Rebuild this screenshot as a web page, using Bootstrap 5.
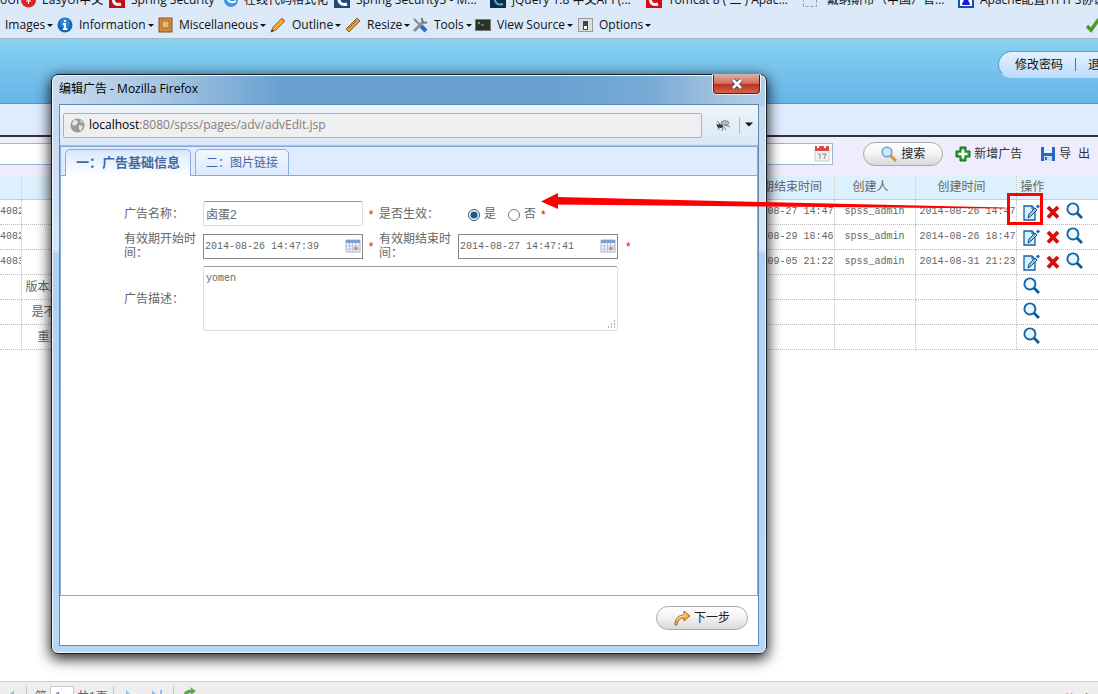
<!DOCTYPE html>
<html lang="zh-CN">
<head>
<meta charset="utf-8">
<meta name="viewport" content="width=device-width, initial-scale=1">
<title>广告管理</title>
<link href="https://cdn.jsdelivr.net/npm/bootstrap@5.3.0/dist/css/bootstrap.min.css" rel="stylesheet">
<style>
body{height:100vh;overflow:hidden;font:12px/14px "Liberation Sans","Noto Sans CJK SC",sans-serif;color:#666;background:#fff}
svg{display:block;flex:none}
button{font:inherit}
.browser-chrome{background:#dbe9f8;border-bottom:1px solid #a3b6cc;font:12px/18px "Open Sans","Noto Sans CJK SC",sans-serif;color:#111;height:39px}
.browser-chrome a{color:#111;text-decoration:none;white-space:nowrap;display:flex;align-items:center;gap:6px;flex:none}
.bookmarks{height:10px}
.bookmarks a{height:20px}
.devtools{height:28px;padding:2px 0 0 5px;gap:6px}
.devtools a{gap:6px}
.tri{width:0;height:0;border:3px solid transparent;border-top:3px solid #111;border-bottom:0;margin-left:-4px}
.site-head{height:65px;background:linear-gradient(#86d2ef,#68b3e7);border-bottom:1px solid #4f9ac0;padding-top:12px}
.user-menu{height:27px;width:130px;margin-right:-30px;border:1px solid #5c9fc4;border-bottom-color:#b8dcf8;border-radius:14px 0 0 14px;background:linear-gradient(#e6f2ff,#bddcfb);padding-left:16px;gap:12px}
.user-menu a{color:#111;text-decoration:none;white-space:nowrap}
.user-menu .vr{height:13px;align-self:center;color:#456;opacity:.8}
.site-band{height:33px;background:#dfecfe;border-bottom:2px solid #333}
.query{height:38px;background:#efedfd;padding:0 8px 4px 0;position:relative}
.query input{height:22px;border:1px solid #9ab6d2;background:#fff;width:150px;padding:0 4px}
.pill{height:24px;border:1px solid #aaa;border-radius:12px;background:linear-gradient(#fff,#f4f4f4 45%,#d9d9d9);color:#222;padding:0}
.plain{border:0;background:none;padding:0;color:#333}
.ads{table-layout:fixed;width:100%;border-collapse:collapse;margin-top:-1px}
.ads th{background:#dcf0fd;font-weight:400;border-top:1px dotted #ccc;border-bottom:1px solid #c5ced6}
.ads th,.ads td{height:25px;padding:0;text-align:center;border-right:1px dotted #bbb;white-space:nowrap;overflow:hidden}
.ads td{border-bottom:1px dotted #bbb}
.ads tr>:last-child{border-right:0}
.mono{font-family:"Liberation Mono","Noto Sans CJK SC",monospace;font-size:10px}
.ops{gap:6px;padding-left:6px}
.ops a:last-child{margin-bottom:3px}
.pager{height:13px;background:#eee;border-top:1px solid #ccc;overflow:hidden;padding:4px 4px 0 0}
.pager>*{flex:none}
.pager .bar{width:1px;height:20px;background:#c4c4c4}
.pager input{width:24px;height:20px;border:1px solid #ccc;padding:0 4px;font-size:11px;color:#666}
.win{position:absolute;left:51px;top:74px;bottom:40px;width:716px;border:1px solid #141c26;border-radius:7px;padding:0 7px 7px;
 background:linear-gradient(90deg,#c9dcee 0,#a4c4e2 16%,#69a0d0 32%,#68a1d1 70%,#78abd6 84%,#a9c6e0 95%,#b4cfe8) top/100% 31px no-repeat,linear-gradient(#c2d8ee,#d6e6f8 30%,#b0d2f4 31%,#b5d8f8);
 box-shadow:inset 0 0 0 1px #f0f7ff,0 4px 14px 1px rgba(0,0,0,.85)}
.win-title{height:29px;color:#000;font:12px/28px "Open Sans","Noto Sans CJK SC",sans-serif}
.win-close{width:47px;height:19px;margin-right:-1px;border:1px solid #5a1f1b;border-top:0;border-radius:0 0 4px 4px;background:linear-gradient(#e8a89d,#cf6a5a 48%,#b8301c 50%,#d5654a);box-shadow:0 0 0 1px rgba(255,255,255,.7);padding:0}
.win-body{border:1px solid #6289b0;background:#fff;min-height:0}
.address{height:41px;background:linear-gradient(#eef5fc,#d9e7f7);border-bottom:1px solid #a9c0d8;padding:0 8px 0 3px}
.url{height:25px;border:1px solid #9db6cb;border-radius:2px;background:#efefef;color:#808080;font:12px/22px "Open Sans",sans-serif;padding-left:6px;gap:4px}
.url b{font-weight:400;color:#000}
.tabs{height:30px;background:#dfecff;border:1px solid #86abdf;padding:2px 0 0 4px;gap:4px}
.tabs button{border:1px solid #86abdf;border-radius:5px 5px 0 0;background:linear-gradient(#f3f8ff,#dbe8fc);color:#416aa3;padding:0 10px;height:27px}
.tabs button.on{background:linear-gradient(#d9e7fd,#fff);border-bottom:0;font-weight:700;font-size:13px}
.panel{border:1px solid #86abdf;border-top:0;padding:25px 63px}
.fields{display:grid;grid-template-columns:79px 160px 16px 79px 160px auto;row-gap:6px;align-items:center;justify-content:start;color:#666}
.fields .tall{height:28px}
.fields input[type=text],.fields textarea{border:1px solid #d9dee6;border-top-color:#999;border-radius:2px;color:#666;width:100%;height:25px;padding:0 2px;display:block}
.fields .when input{border-color:#888;border-radius:0;padding:0 1px}
.fields textarea{height:65px;resize:none;padding:5px 2px}
.fields i{font-style:normal;color:#f00;justify-self:center;padding-top:3px;line-height:11px}
.fields input[type=radio]{width:12px;height:12px;margin:3px 4px 0 0;accent-color:#245a86}
.when,.desc{position:relative}
.when svg{position:absolute;right:2px;top:5px}
.desc{grid-column:2/6}
.desc svg{position:absolute;right:2px;bottom:2px}
.foot{height:49px;padding:10px 10px 0 0}
.note{position:absolute;left:0;top:0;pointer-events:none}
</style>
</head>
<body class="d-flex flex-column">
<svg width="0" height="0" class="position-absolute">
 <defs>
  <symbol id="lens" viewBox="0 0 16 16"><path d="M9.500 9.500l5.500 5.500" stroke="#0b5a94" stroke-width="2.600"/><circle cx="6.500" cy="6.500" r="5.200" fill="#eaf6fd" stroke="#0f66a8" stroke-width="1.800"/></symbol>
  <symbol id="edit" viewBox="0 0 17 17"><path d="M1 2h8l3 3v11H1z" fill="#d8effc" stroke="#1c5c9c" stroke-width="1.300"/><path d="M9 2v3h3" fill="none" stroke="#1c5c9c"/><path d="M5 14l1-4 6-6 2 2-6 6z" fill="#8fc4e8" stroke="#17508c"/><path d="M14 1.500l2 2" stroke="#1668c0" stroke-width="3"/></symbol>
  <symbol id="del" viewBox="0 0 14 14"><path d="M2 2l10 10.500M12 2L2 12.500" stroke="#d80c0c" stroke-width="3.800"/></symbol>
  <symbol id="cal" viewBox="0 0 16 14"><path d="M1 1h14v12H1z" fill="#eef3fb" stroke="#a5b4cc"/><path d="M1 1h14v3H1z" fill="#7ea0d6"/><path d="M4.500 4v9M7.500 4v9M10.500 4v9M1 7h14M1 10h14" stroke="#b7c6de"/><path d="M9 8h4v3H9z" fill="#ee8a72"/></symbol>
 </defs>
</svg>

<header class="browser-chrome flex-shrink-0">
 <nav class="bookmarks d-flex align-items-end" aria-label="书签">
  <a href="#" style="width:21px">oUI</a>
  <a href="#" style="width:88px"><svg width="15" height="16"><circle cx="7.500" cy="8" r="7.500" fill="#e02222"/><path d="M4 5h7M5 9h5M7.500 5v7" stroke="#fff"/></svg>EasyUI中文</a>
  <a href="#" style="width:115px"><svg width="16" height="16"><path d="M0 0h16v16H0z" fill="#c40d12"/><path d="M12 12c-6 2-9-2-7-8" stroke="#fff" stroke-width="3" fill="none"/></svg>Spring Security</a>
  <a href="#" style="width:110px"><svg width="14" height="16"><circle cx="7" cy="8" r="7" fill="#3c9ae0"/><path d="M3 6c2 5 6 5 9 3" stroke="#fff" stroke-width="2" fill="none"/></svg>在线代码格式化</a>
  <a href="#" style="width:156px"><svg width="16" height="16"><path d="M0 0h16v16H0z" fill="#1d4a78"/><path d="M13 12c-6 2-9-2-8-8" stroke="#fff" stroke-width="3" fill="none"/></svg>Spring Security3 - M...</a>
  <a href="#" style="width:156px"><svg width="16" height="16"><path d="M0 0h16v16H0z" fill="#0f2c46"/><path d="M13 12c-6 2-9-2-8-8" stroke="#4aa8dc" stroke-width="2" fill="none"/></svg>jQuery 1.8 中文API (...</a>
  <a href="#" style="width:157px"><svg width="16" height="16"><path d="M0 0h16v16H0z" fill="#d40d12"/><path d="M12 12c-6 2-9-2-7-8" stroke="#fff" stroke-width="3" fill="none"/></svg>Tomcat 8 ( 二 ) Apac...</a>
  <a href="#" style="width:155px"><svg width="18" height="16"><path d="M.5.5h13v14H.5z" fill="none" stroke="#999" stroke-dasharray="3 2"/></svg>戴纳斯帝（中国）官...</a>
  <a href="#"><svg width="16" height="16"><path d="M1 1h14v14H1z" fill="#fff" stroke="#1c4fa8" stroke-width="2"/><path d="M4 13c0-3 2-3 2-6h4c0 3 2 3 2 6z" fill="#1a1ae0"/></svg>Apache配置HTTPS协议</a>
 </nav>
 <nav class="devtools d-flex align-items-center" aria-label="开发工具">
  <a href="#" style="width:46px">Images<span class="tri"></span></a>
  <a href="#" style="width:95px"><svg width="16" height="16"><circle cx="8" cy="8" r="7.500" fill="#1768b8"/><circle cx="8" cy="6" r="5" fill="#4a9be0" opacity=".6"/><path d="M8 3v2M6 7h2v5M6 12h4.500" stroke="#fff" stroke-width="2" fill="none"/></svg>Information<span class="tri"></span></a>
  <a href="#" style="width:106px"><svg width="15" height="16"><rect x="1" y="1" width="13" height="14" fill="#d18a3c" stroke="#8a5416"/><path d="M4 4h7v7H4z" fill="#e8b878" stroke="#a86c28"/></svg>Miscellaneous<span class="tri"></span></a>
  <a href="#" style="width:69px"><svg width="16" height="16"><path d="M1 15l2-5L12 1l3 3-9 9z" fill="#f2a73b" stroke="#a86a1c"/><path d="M11 2l1-1 3 3-1 1z" fill="#d9696a"/><path d="M1 15l1-3 2 2z" fill="#333"/></svg>Outline<span class="tri"></span></a>
  <a href="#" style="width:61px"><svg width="16" height="16"><path d="M1 12L12 1l3 3L4 15z" fill="#d79a54" stroke="#9a6424"/><path d="M4 10l1 1M6 8l1 1M8 6l1 1M10 4l1 1" stroke="#7a4c14"/></svg>Resize<span class="tri"></span></a>
  <a href="#" style="width:57px"><svg width="16" height="16"><path d="M2 2l7 7" stroke="#888" stroke-width="2"/><path d="M9 9l5 5" stroke="#2c6cc4" stroke-width="4"/><path d="M2 14l9-9" stroke="#8a8f96" stroke-width="3"/><path d="M10 1c-1 3 2 6 5 4" stroke="#777" stroke-width="2" fill="none"/></svg>Tools<span class="tri"></span></a>
  <a href="#" style="width:97px"><svg width="16" height="16"><rect x=".5" y="2.500" width="15" height="11" fill="#263326" stroke="#777"/><path d="M3 5l2 1-2 1M6 8h3" stroke="#6c6" fill="none"/></svg>View Source<span class="tri"></span></a>
  <a href="#"><svg width="15" height="16"><rect x=".5" y="1.500" width="14" height="13" fill="#ddd" stroke="#999"/><rect x="5.500" y="4.500" width="4" height="8" fill="#fff" stroke="#444"/><path d="M5 5h5v4H5z" fill="#444"/></svg>Options<span class="tri"></span></a>
  <svg class="ms-auto" width="12" height="16"><path d="M1 9l4 4 8-11" stroke="#4d9a18" stroke-width="3.500" fill="none"/></svg>
 </nav>
</header>

<div class="site-head d-flex justify-content-end flex-shrink-0">
 <nav class="user-menu d-flex align-items-center"><a href="#">修改密码</a><span class="vr"></span><a href="#">退出</a></nav>
</div>
<div class="site-band flex-shrink-0"></div>

<form class="query d-flex align-items-center flex-shrink-0" onsubmit="return false">
 <input type="text" class="border-start-0" aria-label="广告名称">
 <span class="when ms-auto"><input type="text" aria-label="结束时间"><svg width="17" height="17" style="top:2px"><path d="M1 3h14v13H1z" fill="#f2f2f2" stroke="#ccc"/><path d="M1 1h14v5H1z" fill="#dc4b4b"/><path d="M4 0v3M11 0v3" stroke="#fff" stroke-width="2"/><path d="M4 9h2v5M8 9h4l-2 5" stroke="#888" fill="none"/></svg></span>
 <button class="pill d-flex align-items-center justify-content-center gap-1" style="width:80px;margin:0 12px 0 30px"><svg width="16" height="16"><path d="M9 9l6 6" stroke="#d99338" stroke-width="3"/><circle cx="6" cy="6" r="4.800" fill="#cfe8fb" stroke="#6fa3d8" stroke-width="1.600"/></svg>搜索</button>
 <button class="plain d-flex align-items-center" style="gap:3px;margin-right:19px"><svg width="16" height="16"><path d="M5 1h6v4h4v6h-4v4H5v-4H1V5h4z" fill="#2fa03a" stroke="#0c6a1c"/><path d="M8 3.500v9M3.500 8h9" stroke="#fff" stroke-width="2.500"/></svg>新增广告</button>
 <button class="plain d-flex align-items-center" style="gap:4px"><svg width="14" height="16"><path d="M0 1h14v14H0z" fill="#2b66c4"/><path d="M3 1h8v6H3z" fill="#eaf3fd"/><path d="M3 10h8v5H3z" fill="#d5dbe4"/><path d="M4 11h2v3H4z" fill="#2b66c4"/></svg><span>导&nbsp; 出</span></button>
</form>

<main class="flex-grow-1">
<table class="ads">
 <colgroup><col style="width:21px"><col style="width:57px"><col><col style="width:108px"><col style="width:81px"><col style="width:101px"><col style="width:82px"></colgroup>
 <thead><tr><th></th><th></th><th></th><th>有效期结束时间</th><th class="pe-2">创建人</th><th class="pe-2">创建时间</th><th class="text-start ps-1">操作</th></tr></thead>
 <tbody id="rows"></tbody>
</table>
</main>

<footer class="pager d-flex align-items-start flex-shrink-0">
 <svg width="26" height="20"><path d="M14 4l-6 6 6 6z" fill="#9bb8e8"/></svg><span class="bar"></span>
 <span style="padding:4px 3px 0 8px">第</span><input type="text" value="1" aria-label="页码"><span style="padding:4px 5px 0 3px">共1页</span><span class="bar"></span>
 <svg width="59" height="20"><path d="M12 4l6 6-6 6zM38 4l6 6-6 6zM46 4h2v12h-2z" fill="#9bb8e8"/></svg><span class="bar"></span>
 <svg width="30" height="20"><path d="M9 12c0-8 6-9 8-8l-1-3 6 4-5 4v-2c-3 0-4 2-4 5z" fill="#5cab4c"/></svg>
 <span class="ms-auto" style="padding-top:7px">共6条</span>
</footer>

<section class="win d-flex flex-column" role="dialog" aria-label="编辑广告">
 <div class="win-title d-flex justify-content-between flex-shrink-0"><span>编辑广告 - Mozilla Firefox</span>
  <button class="win-close d-flex align-items-center justify-content-center" aria-label="关闭"><svg width="14" height="12"><path d="M3 2l8 8M11 2l-8 8" stroke="#445" stroke-width="4.500"/><path d="M3 2l8 8M11 2l-8 8" stroke="#fff" stroke-width="2.600"/></svg></button></div>
 <div class="win-body d-flex flex-column flex-grow-1">
  <div class="address d-flex align-items-center flex-shrink-0">
   <div class="url d-flex align-items-center flex-grow-1"><svg width="15" height="15"><circle cx="7.500" cy="7.500" r="7" fill="#999"/><path d="M4 2l4 1-1 3-3 2-2-2zM9 7l4 1-2 5-2-2zM10 2l3 2-2 1z" fill="#e8e8e8"/></svg><span><b>localhost</b>:8080/spss/pages/adv/advEdit.jsp</span></div>
   <svg width="37" height="16"><g transform="translate(14 1)"><ellipse cx="4" cy="8" rx="3" ry="2" fill="#333"/><ellipse cx="9" cy="5" rx="4" ry="2.300" fill="#bbb" stroke="#888"/><path d="M0 6l3 1M2 12l2-3M6 13l1-4M1 3l4 4M10 12l-2-3M14 9L9 7" stroke="#777"/></g></svg>
   <span style="width:1px;height:17px;background:#aebccb"></span>
   <svg width="9" height="8" style="margin:0 -4px 0 5px"><path d="M0 1.500h8l-4 4z" fill="#111"/></svg>
  </div>
  <div class="tabs d-flex flex-shrink-0" role="tablist"><button class="on" role="tab">一：广告基础信息</button><button role="tab">二：图片链接</button></div>
  <div class="panel flex-grow-1">
   <form class="fields" onsubmit="return false">
    <label for="nm">广告名称：</label><input type="text" id="nm" value="卤蛋2"><i>*</i>
    <span>是否生效：</span><span class="d-flex align-items-center" style="padding-left:10px"><input type="radio" name="on" id="y" checked><label for="y">是</label><input type="radio" name="on" id="n" style="margin-left:12px"><label for="n">否</label><i style="margin-left:5px">*</i></span><span></span>
    <label for="d1" class="tall">有效期开始时间：</label><span class="when"><input type="text" class="mono" id="d1" value="2014-08-26 14:47:39"><svg width="16" height="14"><use href="#cal"/></svg></span><i>*</i>
    <label for="d2" class="tall">有效期结束时间：</label><span class="when"><input type="text" class="mono" id="d2" value="2014-08-27 14:47:41"><svg width="16" height="14"><use href="#cal"/></svg></span><i class="ps-2">*</i>
    <label for="ds">广告描述：</label><span class="desc"><textarea id="ds" class="mono">yomen</textarea><svg width="9" height="9"><path d="M7 1h1M4 4h1M7 4h1M1 7h1M4 7h1M7 7h1" stroke="#999" stroke-width="1.500"/></svg></span>
   </form>
  </div>
  <div class="foot d-flex justify-content-end flex-shrink-0"><button class="pill d-flex align-items-center justify-content-center" style="width:92px;gap:3px"><svg width="17" height="16"><path d="M1 15C1 8 5 5 10 5V1l6 5-6 5V8c-4 0-6 2-7 7z" fill="#f6b042" stroke="#9c6a2c"/><path d="M3 10c1-3 4-4 8-4V3.500" stroke="#fde4b4" fill="none"/></svg>下一步</button></div>
 </div>
</section>

<svg class="note" width="1098" height="240"><path d="M541 201.500L558 193v4l202 5 245 5.500v1L760 206.500l-202-2v4.500z" fill="#f00"/><rect x="1008.500" y="194.500" width="33" height="29" fill="none" stroke="#f00" stroke-width="3"/></svg>

<script src="https://cdn.jsdelivr.net/npm/bootstrap@5.3.0/dist/js/bootstrap.bundle.min.js"></script>
<script>
const rows = [
 ['4082','','2014-08-27 14:47','spss_admin','2014-08-26 14:47'],
 ['4082','','2014-08-29 18:46','spss_admin','2014-08-26 18:47'],
 ['4083','','2014-09-05 21:22','spss_admin','2014-08-31 21:23'],
 ['','版本上线','','',''],['','是不是','','',''],['','重要','','','']];
const ic = (id, w, h, t) => `<a href="#" aria-label="${t}"><svg width="${w}" height="${h}"><use href="#${id}"/></svg></a>`;
document.getElementById('rows').innerHTML = rows.map(r => `<tr><td class="mono text-end">${r[0]}</td><td>${r[1]}</td><td></td>
 <td class="mono text-end">${r[2]}</td><td class="mono">${r[3]}</td><td class="mono text-end">${r[4]}</td>
 <td><div class="ops d-flex align-items-center">${r[0] ? ic('edit',17,17,'编辑') + ic('del',14,14,'删除') : ''}${ic('lens',17,17,'查看')}</div></td></tr>`).join('');
</script>
</body>
</html>
